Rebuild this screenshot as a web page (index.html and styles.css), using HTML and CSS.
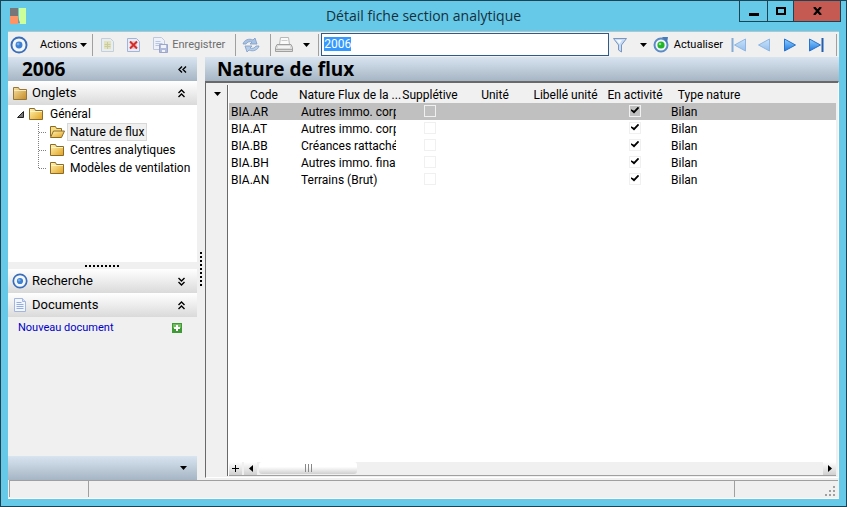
FILE: index.html
```
<!DOCTYPE html>
<html lang="fr">
    <head>
        <meta charset="utf-8">
        <title>Détail fiche section analytique</title>
        <link rel="stylesheet" href="styles.css">
    </head>
    <body>
        <svg class="defs" aria-hidden="true">
            <defs>
                <linearGradient id="gold" x1="0" y1="0" x2="1" y2="1">
                    <stop offset="0" stop-color="#fff6b8"/>
                    <stop offset="1" stop-color="#e2a01c"/>
                </linearGradient>
                <linearGradient id="brown" x1="0" y1="0" x2="1" y2="1">
                    <stop offset="0" stop-color="#f6e2a4"/>
                    <stop offset="1" stop-color="#c58a22"/>
                </linearGradient>
                <linearGradient id="blue" x1="0" y1="0" x2="0" y2="1">
                    <stop offset="0" stop-color="#8fd0ff"/>
                    <stop offset="1" stop-color="#1f78e0"/>
                </linearGradient>
                <linearGradient id="pale" x1="0" y1="0" x2="0" y2="1">
                    <stop offset="0" stop-color="#c8e2fa"/>
                    <stop offset="1" stop-color="#96c0ec"/>
                </linearGradient>
                <symbol id="i-target" viewBox="0 0 16 16">
                    <circle cx="8" cy="8" r="6.7" fill="#f4f8fe" stroke="#3a6db8" stroke-width="1.700"/>
                    <circle cx="8" cy="8" r="3.1" fill="#3f80d0"/>
                    <circle cx="7.2" cy="7.2" r="1.3" fill="#78b0ea"/>
                </symbol>
                <symbol id="i-folder" viewBox="0 0 16 16">
                    <path d="M1.500 2.500h5l1 2h7v9h-13z" fill="url(#gold)" stroke="#8c6a28"/>
                    <path d="M2 5.500h12" stroke="#fff3c0"/>
                </symbol>
                <symbol id="i-tab" viewBox="0 0 16 16">
                    <path d="M1.500 2.500h5l1 2h7v10h-13z" fill="url(#brown)" stroke="#94763a"/>
                    <path d="M2 5.500h12" stroke="#fbeab8"/>
                </symbol>
                <symbol id="i-open" viewBox="0 0 16 16">
                    <path d="M1.500 12.500v-10h5l1 2h5v3" fill="#f8dd80" stroke="#8c6a28"/>
                    <path d="M1.500 13.500l3-6.500h11l-3 6.500z" fill="url(#gold)" stroke="#8c6a28"/>
                </symbol>
                <symbol id="i-page" viewBox="0 0 16 16">
                    <path d="M2.500 1.500h8l3 3v10h-11z" fill="#f2f6ff" stroke="#a4b6dc"/>
                    <path d="M10.500 1.500v3h3" fill="#d4e0f8" stroke="#a4b6dc"/>
                    <path d="M4.500 5.500h5M4.500 7.500h7M4.500 9.500h7M4.500 11.500h7" stroke="#94ace0"/>
                </symbol>
                <symbol id="i-up" viewBox="0 0 9 9">
                    <path d="M1.500 4l3-3 3 3M1.500 8l3-3 3 3" fill="none" stroke="#000" stroke-width="1.400"/>
                </symbol>
                <symbol id="i-down" viewBox="0 0 9 9">
                    <path d="M1.500 1l3 3 3-3M1.500 5l3 3 3-3" fill="none" stroke="#000" stroke-width="1.400"/>
                </symbol>
                <symbol id="i-left" viewBox="0 0 9 9">
                    <path d="M4 1.500l-3 3 3 3M8 1.500l-3 3 3 3" fill="none" stroke="#000" stroke-width="1.400"/>
                </symbol>
                <symbol id="i-drop" viewBox="0 0 7 4">
                    <path d="M0 0h7L3.500 4z"/>
                </symbol>
            </defs>
        </svg>
        <div class="window">
            <header class="titlebar">
                <svg class="logo" viewBox="0 0 16 16">
                    <path d="M0 0h8v8H0z" fill="#77777a"/>
                    <path d="M0 8h8v8H0z" fill="#ff9466"/>
                    <path d="M9 0h7v16h-6l-1-4z" fill="#ccff99"/>
                    <path d="M8 9l2 6H8z" fill="#8a8f94"/>
                </svg>
                <h1 class="caption">Détail fiche section analytique</h1>
                <div class="controls">
                    <button class="control" aria-label="Réduire"><svg width="10" height="9"><path d="M0 6h10v3H0z"/></svg></button>
                    <button class="control max" aria-label="Agrandir"><svg width="10" height="8"><path d="M1 1h8v6H1z" fill="none" stroke="#000" stroke-width="2"/></svg></button>
                    <button class="control close" aria-label="Fermer"><svg width="9" height="8"><path d="M1 0l7 8M8 0L1 8" stroke="#000" stroke-width="2.200"/></svg></button>
                </div>
            </header>
            <div class="client">
                <div class="toolbar">
                    <button class="tool target" aria-label="Cible"><svg width="18" height="18"><use href="#i-target"/></svg></button>
                    <button class="tool actions">Actions <svg width="7" height="4"><use href="#i-drop"/></svg></button>
                    <span class="sep"></span>
                    <button class="tool" aria-label="Nouveau" disabled>
                        <svg width="16" height="16" opacity=".6"><path d="M1.500 1.500h9l3 3v10h-12z" fill="#e4ecf2" stroke="#aabaca"/><path d="M4 4h7v8H4z" fill="#dcdc98"/><path d="M4.500 7.500h6M4.500 9.500h6M7.500 5v7" stroke="#b4b46c"/></svg>
                    </button>
                    <button class="tool" aria-label="Supprimer">
                        <svg width="16" height="16"><path d="M1.500 1.500h9l3 3v10h-12z" fill="#e6edfa" stroke="#a4b4d4"/><path d="M4 4h7v8H4z" fill="#f4c8c4"/><path d="M4 4.500l7 7M11 4.500l-7 7" stroke="#d22c2c" stroke-width="2"/></svg>
                    </button>
                    <button class="tool save" disabled>
                        <svg width="16" height="16" opacity=".65"><path d="M1.500 .5h8l3 3v9h-11z" fill="#eef2fc" stroke="#a4b4d4"/><path d="M3.500 4.500h5M3.500 6.500h7M3.500 8.500h4" stroke="#9ab0dc"/><path d="M7.500 7.500h8v8h-8z" fill="#8e9ed0" stroke="#7080b8"/><path d="M9 8h5v3H9zM10 13h3v2h-3z" fill="#f4f6ff"/></svg>
                        Enregistrer
                    </button>
                    <span class="sep"></span>
                    <button class="tool sync" aria-label="Synchroniser" disabled>
                        <svg width="18" height="16"><path d="M1 7c1-4 6-6 10-4l2-2 2 6H8l2-2C8 4 5 5 4 7z" fill="#a8c2e4" stroke="#7d9cc8" stroke-width=".8"/><path d="M17 9c-1 4-6 6-10 4l-2 2-2-6h7l-2 2c2 1 5 0 6-2z" fill="#b8cee8" stroke="#7d9cc8" stroke-width=".8"/></svg>
                    </button>
                    <span class="sep"></span>
                    <button class="tool print" aria-label="Imprimer">
                        <svg width="18" height="17"><path d="M4.500 8.500l1-7h8l1 7" fill="#fafafa" stroke="#b8b8b8"/><path d="M6.500 4.500h6" stroke="#ccc"/><path d="M2 8.500h14l1.500 3v4H.5v-4z" fill="#dcdcda" stroke="#a0a0a0"/><path d="M3 10h12v2H3z" fill="#f4f4f4"/><path d="M1 13.500h16" stroke="#aaa"/></svg>
                        <svg width="7" height="4"><use href="#i-drop"/></svg>
                    </button>
                    <span class="sep"></span>
                    <input class="search" type="text" value="2006" aria-label="Section">
                    <button class="tool filter" aria-label="Filtrer">
                        <svg width="16" height="16"><path d="M1.500 1.500h13l-5 6.500v7l-3-2V8z" fill="#c8dcf6" stroke="#7b96be"/><path d="M4 3h6L7.500 7z" fill="#f2f8ff"/></svg>
                        <svg width="7" height="4"><use href="#i-drop"/></svg>
                    </button>
                    <button class="tool refresh">
                        <svg width="17" height="17"><circle cx="8" cy="9" r="6.500" fill="#f2f6fc" stroke="#5b8ac4" stroke-width="2"/><path d="M9 1l6 0-1 6z" fill="#477ab8"/><circle cx="8" cy="9" r="3.600" fill="#22b32a"/><circle cx="7" cy="8" r="1.300" fill="#88e484"/></svg>
                        Actualiser
                    </button>
                    <div class="nav">
                        <button class="tool" aria-label="Premier" disabled><svg width="15" height="14"><path d="M1.500 0v14" stroke="#86abd6" stroke-width="2"/><path d="M14.500 1v12L3.500 7z" fill="url(#pale)" stroke="#8fb6e2"/></svg></button>
                        <button class="tool" aria-label="Précédent" disabled><svg width="15" height="14"><path d="M12.500 1v12L1.500 7z" fill="url(#pale)" stroke="#8fb6e2"/></svg></button>
                        <button class="tool" aria-label="Suivant"><svg width="15" height="14"><path d="M1.500 1v12l11-6z" fill="url(#blue)" stroke="#2b72c8"/></svg></button>
                        <button class="tool" aria-label="Dernier"><svg width="15" height="14"><path d="M.5 1v12l11-6z" fill="url(#blue)" stroke="#2b72c8"/><path d="M13.500 0v14" stroke="#245fae" stroke-width="2"/></svg></button>
                    </div>
                    <span class="sep end"></span>
                </div>
                <div class="main">
                    <aside class="side">
                        <div class="band">
                            <h2 class="band-title">2006</h2>
                            <button class="fold" aria-label="Replier"><svg width="9" height="9"><use href="#i-left"/></svg></button>
                        </div>
                        <button class="section"><svg width="16" height="16"><use href="#i-tab"/></svg>Onglets<svg class="chevron" width="9" height="9"><use href="#i-up"/></svg></button>
                        <div class="tree">
                            <div class="node root"><svg width="7" height="7"><path d="M6.500 .5v6h-6z" fill="#777" stroke="#222"/></svg><svg width="16" height="16"><use href="#i-folder"/></svg><span class="label">Général</span></div>
                            <ul class="children">
                                <li class="node"><svg width="16" height="16"><use href="#i-open"/></svg><a href="#flux" class="label">Nature de flux</a></li>
                                <li class="node"><svg width="16" height="16"><use href="#i-folder"/></svg><a href="#centres" class="label">Centres analytiques</a></li>
                                <li class="node"><svg width="16" height="16"><use href="#i-folder"/></svg><a href="#modeles" class="label">Modèles de ventilation</a></li>
                            </ul>
                        </div>
                        <div class="grip"></div>
                        <button class="section"><svg width="16" height="16"><use href="#i-target"/></svg>Recherche<svg class="chevron" width="9" height="9"><use href="#i-down"/></svg></button>
                        <button class="section"><svg width="16" height="16"><use href="#i-page"/></svg>Documents<svg class="chevron" width="9" height="9"><use href="#i-up"/></svg></button>
                        <div class="docs">
                            <a href="#nouveau">Nouveau document</a>
                            <button class="add" aria-label="Ajouter"><svg width="10" height="10"><path d="M0 0h10v10H0z" fill="#3f9a35"/><path d="M1 1h8v4H1z" fill="#72bd60"/><path d="M5 2v6M2 5h6" stroke="#fff" stroke-width="2"/></svg></button>
                        </div>
                        <div class="band foot"><button class="fold" aria-label="Options"><svg width="7" height="4"><use href="#i-drop"/></svg></button></div>
                    </aside>
                    <div class="splitter"><span></span></div>
                    <section class="content" id="flux">
                        <div class="band"><h2 class="band-title">Nature de flux</h2></div>
                        <div class="frame">
                            <div class="gutter"><button class="fold" aria-label="Menu"><svg width="7" height="4"><use href="#i-drop"/></svg></button></div>
                            <div class="sheet">
                                <table class="grid">
                                    <colgroup>
                                        <col class="c-code"><col class="c-name"><col class="c-sup"><col class="c-unit"><col class="c-lib"><col class="c-act"><col class="c-type"><col>
                                    </colgroup>
                                    <thead>
                                        <tr><th>Code</th><th>Nature Flux de la ...</th><th>Supplétive</th><th>Unité</th><th>Libellé unité</th><th>En activité</th><th>Type nature</th><th></th></tr>
                                    </thead>
                                    <tbody>
                                        <tr class="selected"><td>BIA.AR</td><td><div class="clip">Autres immo. corp</div></td><td><input type="checkbox" aria-label="Supplétive BIA.AR"></td><td></td><td></td><td><input type="checkbox" aria-label="En activité BIA.AR" checked></td><td>Bilan</td><td></td></tr>
                                        <tr><td>BIA.AT</td><td><div class="clip">Autres immo. corp</div></td><td><input type="checkbox" aria-label="Supplétive BIA.AT"></td><td></td><td></td><td><input type="checkbox" aria-label="En activité BIA.AT" checked></td><td>Bilan</td><td></td></tr>
                                        <tr><td>BIA.BB</td><td><div class="clip">Créances rattaché</div></td><td><input type="checkbox" aria-label="Supplétive BIA.BB"></td><td></td><td></td><td><input type="checkbox" aria-label="En activité BIA.BB" checked></td><td>Bilan</td><td></td></tr>
                                        <tr><td>BIA.BH</td><td><div class="clip">Autres immo. fina</div></td><td><input type="checkbox" aria-label="Supplétive BIA.BH"></td><td></td><td></td><td><input type="checkbox" aria-label="En activité BIA.BH" checked></td><td>Bilan</td><td></td></tr>
                                        <tr><td>BIA.AN</td><td><div class="clip">Terrains (Brut)</div></td><td><input type="checkbox" aria-label="Supplétive BIA.AN"></td><td></td><td></td><td><input type="checkbox" aria-label="En activité BIA.AN" checked></td><td>Bilan</td><td></td></tr>
                                    </tbody>
                                </table>
                                <div class="scroll">
                                    <button class="arrow" aria-label="Ajouter une ligne"><svg width="7" height="7"><path d="M3.500 0v7M0 3.500h7" stroke="#000"/></svg></button>
                                    <button class="arrow" aria-label="Gauche"><svg width="4" height="7"><path d="M4 0v7L0 3.500z"/></svg></button>
                                    <div class="thumb"><span></span></div>
                                    <button class="arrow right" aria-label="Droite"><svg width="4" height="7"><path d="M0 0v7l4-3.500z"/></svg></button>
                                </div>
                            </div>
                        </div>
                    </section>
                </div>
                <footer class="status">
                    <span class="pane first"></span>
                    <span class="pane wide"></span>
                    <span class="pane last"><svg width="10" height="10" fill="#a0a0a0"><path d="M8 0h2v2H8zM4 4h2v2H4zM8 4h2v2H8zM0 8h2v2H0zM4 8h2v2H4zM8 8h2v2H8z"/></svg></span>
                </footer>
            </div>
        </div>
        <script>
            var search = document.querySelector(".search");
            search.focus();
            search.select();
        </script>
    </body>
</html>
```
FILE: styles.css
```
* {
    box-sizing: border-box;
    margin: 0;
    padding: 0;
}
body {
    font-family: Roboto, "Open Sans", sans-serif;
    font-size: 12px;
    line-height: 16px;
    color: #000;
}
button {
    font: inherit;
    color: inherit;
    border: 0;
    background: none;
}
svg {
    display: block;
    flex: none;
}
.defs {
    position: absolute;
    width: 0;
    height: 0;
}
.window {
    height: 100vh;
    display: flex;
    flex-direction: column;
    padding: 0 7px 7px;
    background: #67c9e8;
    border: 1px solid #1d4254;
}
.titlebar {
    height: 30px;
    display: grid;
    grid-template-columns: 1fr auto 1fr;
    align-items: center;
}
.logo {
    width: 16px;
    height: 16px;
    margin-left: 2px;
}
.caption {
    font-family: "Open Sans", sans-serif;
    font-size: 14px;
    font-weight: 400;
    line-height: 20px;
    color: #14303c;
}
.controls {
    display: flex;
    align-self: start;
    justify-self: end;
    height: 21px;
    margin-right: -2px;
    border: 1px solid #1d4254;
    border-top: 0;
}
.control {
    width: 27px;
    display: flex;
    align-items: center;
    justify-content: center;
}
.control.max {
    border: solid #1d4254;
    border-width: 0 1px;
}
.control.close {
    width: 46px;
    background: #c55a52;
}
.client {
    flex: 1;
    min-height: 0;
    display: flex;
    flex-direction: column;
    background: #f0f0f0;
}
.toolbar {
    height: 26px;
    display: flex;
    align-items: center;
    font-size: 11px;
    border-top: 1px solid #b4c4cc;
}
.tool {
    display: flex;
    align-items: center;
    gap: 4px;
    margin: 0 5px;
}
.tool.target {
    margin: 0 8px 0 2px;
}
.tool.actions {
    gap: 3px;
    margin: 0 3px 0 4px;
}
.tool:disabled {
    color: #6d6d6d;
}
.tool.save {
    margin-right: 8px;
}
.tool.sync {
    margin: 0 8px 0 4px;
}
.sep {
    width: 1px;
    height: 22px;
    background: #a0a0a0;
    margin: 0 2px;
}
.sep.end {
    margin: 0 2px 0 12px;
}
.tool.print {
    gap: 10px;
    margin: 0 6px 0 2px;
}
.search {
    flex: 1;
    min-width: 0;
    height: 23px;
    padding: 0 2px 2px;
    font: inherit;
    font-size: 12px;
    border: 1px solid #2c5c8c;
    background: #fff;
    outline: 0;
}
.search::selection {
    color: #fff;
    background: #3399ff;
}
.tool.filter {
    gap: 12px;
    margin: 0 6px 0 3px;
}
.tool.refresh {
    margin: 0 3px 0 0;
}
.nav {
    display: flex;
    gap: 11px;
    margin-left: 5px;
}
.nav .tool {
    margin: 0;
}
.main {
    flex: 1;
    min-height: 0;
    display: flex;
}
.side {
    width: 189px;
    display: flex;
    flex-direction: column;
}
.band {
    height: 24px;
    flex: none;
    display: flex;
    align-items: center;
    padding: 0 10px 0 14px;
    background: linear-gradient(#d8e4f0, #a6b5c4);
}
.band-title {
    font-family: "Open Sans", sans-serif;
    font-size: 19px;
    line-height: 24px;
}
.fold {
    margin-left: auto;
}
.section {
    height: 24px;
    flex: none;
    display: flex;
    align-items: center;
    gap: 4px;
    padding: 0 11px 0 4px;
    font-size: 13px;
    background: linear-gradient(#fff, #dadada);
}
.chevron {
    margin-left: auto;
}
.tree {
    height: 157px;
    background: #fff;
}
.node {
    height: 18px;
    display: flex;
    align-items: center;
    gap: 3px;
}
.node.root {
    padding-left: 9px;
    gap: 4px;
}
.children {
    list-style: none;
    margin-left: 30px;
    border-left: 1px dotted #808080;
    height: 45px;
}
.children .node::before {
    content: "";
    width: 7px;
    border-top: 1px dotted #808080;
}
.label {
    padding: 0 2px;
    color: #000;
    text-decoration: none;
    white-space: nowrap;
}
.children .node:first-child .label {
    background: #f0f0f0;
    outline: 1px solid #d8d8d8;
}
.grip {
    height: 7px;
    display: flex;
    align-items: center;
    justify-content: center;
    background: #f0f0f0;
}
.grip::before {
    content: "";
    width: 35px;
    height: 2px;
    background: repeating-linear-gradient(90deg, #000 0 2px, transparent 2px 4px);
}
.docs {
    flex: 1;
    display: flex;
    align-items: flex-start;
    justify-content: space-between;
    padding: 3px 15px 0 10px;
    font-size: 11px;
}
.docs a {
    color: #0000c8;
    text-decoration: none;
}
.add {
    padding: 3px 0;
}
.splitter {
    width: 8px;
    display: flex;
    align-items: center;
    justify-content: center;
}
.splitter span {
    width: 2px;
    height: 34px;
    background: repeating-linear-gradient(#000 0 2px, transparent 2px 4px);
}
.content {
    flex: 1;
    min-width: 0;
    display: flex;
    flex-direction: column;
}
.content .band {
    padding-left: 12px;
}
.frame {
    flex: 1;
    min-height: 0;
    display: flex;
    padding: 2px 2px 1px;
    border: 1px solid #fff;
    border-top: 2px solid #696969;
    border-left-color: #696969;
    margin-bottom: 2px;
}
.gutter {
    width: 20px;
    padding: 7px 6px;
    border-right: 1px solid #696969;
}
.gutter .fold {
    display: block;
}
.sheet {
    flex: 1;
    min-width: 0;
    display: flex;
    flex-direction: column;
    justify-content: space-between;
    padding-left: 1px;
    background: #fff;
}
.grid {
    width: 100%;
    table-layout: fixed;
    border-collapse: collapse;
}
.c-code, .c-unit { width: 70px; }
.c-name { width: 101px; }
.c-sup { width: 60px; }
.c-lib { width: 71px; }
.c-act { width: 68px; }
.c-type { width: 80px; }
.grid th {
    height: 18px;
    padding-top: 2px;
    font-weight: 400;
    white-space: nowrap;
    background: #f0f0f0;
}
.grid td {
    height: 17px;
    padding: 1px 0 0 2px;
    white-space: nowrap;
}
.clip {
    width: 95px;
    overflow: hidden;
}
.selected {
    background: #c0c0c0;
}
.grid td:nth-child(3),
.grid td:nth-child(6) {
    padding: 0;
}
.grid input {
    appearance: none;
    display: block;
    width: 12px;
    height: 12px;
    margin: 0 auto 2px;
    border: 1px solid #f0f0f0;
}
.grid input:checked::before {
    content: "";
    display: block;
    width: 8px;
    height: 7px;
    margin: 1px;
    background: #000;
    clip-path: polygon(0 38%, 38% 62%, 90% 0, 100% 25%, 38% 100%, 0 62%);
}
.scroll {
    height: 14px;
    display: flex;
    gap: 2px;
    background: #f0f0f0;
    border-bottom: 1px solid #a0a0a0;
}
.arrow {
    width: 13px;
    display: flex;
    align-items: center;
    justify-content: center;
    background: linear-gradient(#fff, #d0d0d0);
}
.arrow.right {
    margin-left: auto;
}
.thumb {
    width: 98px;
    height: 12px;
    display: flex;
    align-items: center;
    justify-content: center;
    border-radius: 3px;
    background: linear-gradient(#fff 40%, #d0d0d0);
}
.thumb span {
    width: 7px;
    height: 8px;
    background: repeating-linear-gradient(90deg, #888 0 1px, transparent 1px 3px);
}
.status {
    height: 19px;
    flex: none;
    display: flex;
    padding: 0 1px 1px;
    border-bottom: 1px solid #fff;
}
.pane {
    border: solid #a0a0a0;
    border-width: 1px 0 0 1px;
}
.pane.first {
    width: 79px;
}
.pane.wide {
    flex: 1;
}
.pane.last {
    width: 104px;
    display: flex;
    align-items: flex-end;
    justify-content: flex-end;
    padding: 0 3px 1px;
}
```
